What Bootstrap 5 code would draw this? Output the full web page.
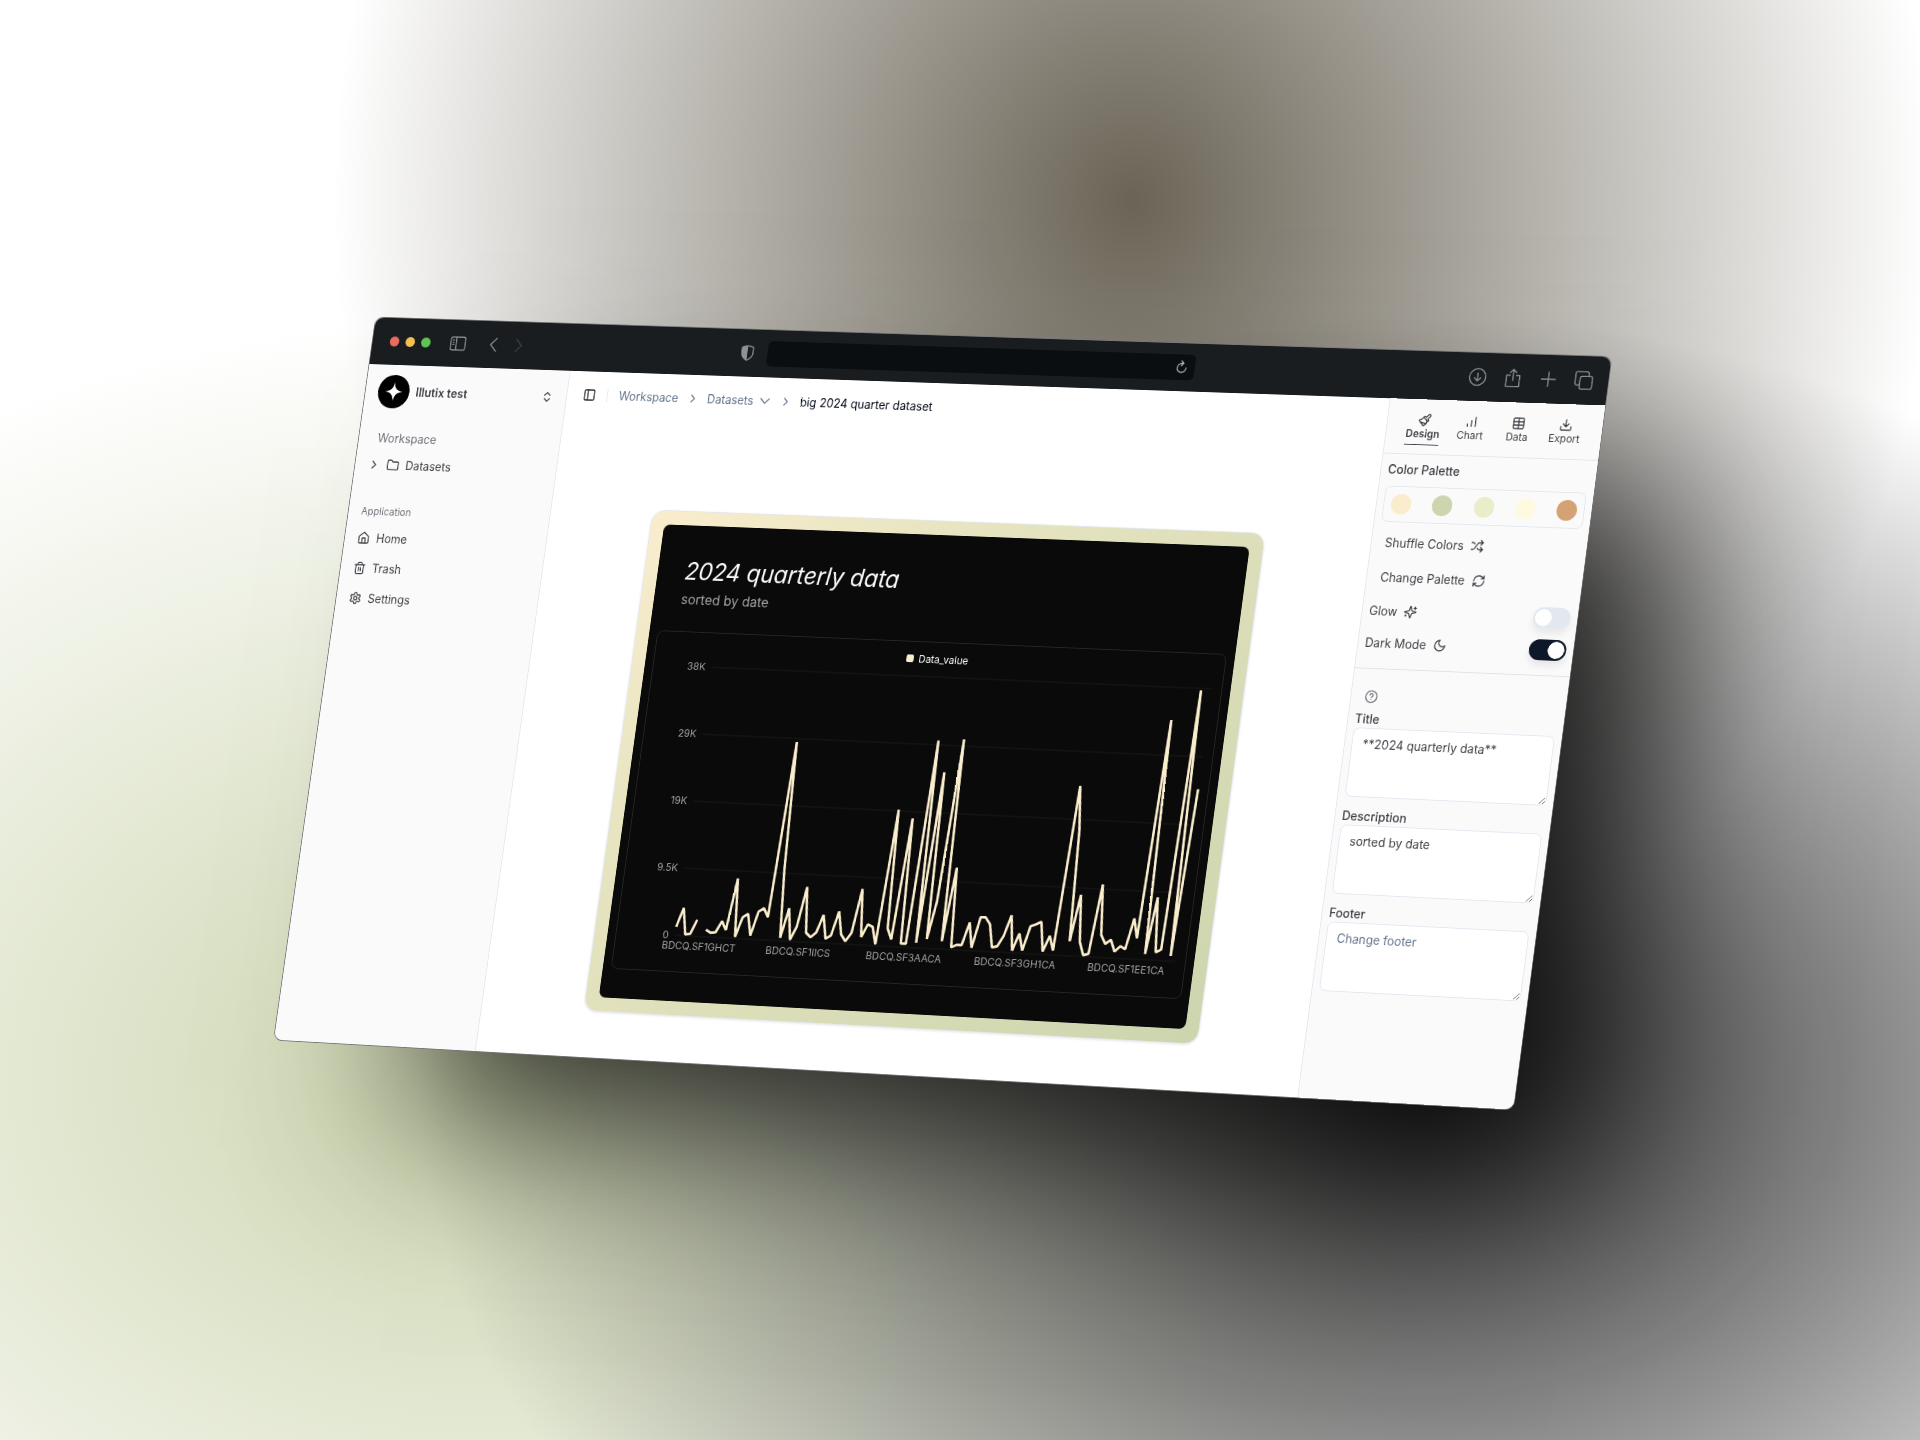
<!DOCTYPE html>
<html lang="en">
<head>
<meta charset="utf-8">
<meta name="viewport" content="width=device-width, initial-scale=1">
<title>Illutix</title>
<link href="https://cdn.jsdelivr.net/npm/bootstrap@5.3.0/dist/css/bootstrap.min.css" rel="stylesheet">
<style>
  body { font-family: Inter, "Liberation Sans", sans-serif; font-size: 14px; line-height: 20px; color: #3f3f46; }
  .stage {
    min-height: 100vh;
    background:
      radial-gradient(at 74% 75%, #262626 0, transparent 50%),
      radial-gradient(at 59% 14%, #6a6456 0, transparent 50%),
      radial-gradient(at 25% 75%, #ccd5ae 0, transparent 50%),
      #fff;
  }
  /* the tilted browser window */
  .browser {
    width: 1520px; min-height: 864px; flex: none;
    border-radius: 10px; background: #fff;
    transform-origin: 0 0;
    transform: matrix3d(.775949, .024184, 0, -.000026125, -.118569, .830671, 0, -.0000069236, 0, 0, 1, 0, 176, 29.5, 0, 1);
    box-shadow: 0 0 0 1px #77777a, 140px 110px 200px -50px rgba(0, 0, 0, .8);
  }
  svg { display: block; flex: none; }
  .ico { width: 16px; height: 16px; fill: none; stroke: currentColor; stroke-width: 2; stroke-linecap: round; stroke-linejoin: round; }
  .chrome-bar { height: 56px; background: #191d20; color: #8f9294; border-radius: 10px 10px 0 0; padding: 0 18px 0 22px; }
  .chrome-bar .btn { color: inherit; }
  .chrome-ico { width: 22px; height: 22px; stroke-width: 1.5; }
  .light { width: 12px; height: 12px; border-radius: 50%; }
  .address { width: 526px; height: 30px; border-radius: 6px; background: #0a0e11; color: #b5b7b8; }
  .address input { min-width: 0; }
  .btn { --bs-btn-padding-x: 0; --bs-btn-padding-y: 0; --bs-btn-border-width: 0; --bs-btn-font-size: 14px; --bs-btn-line-height: 20px; --bs-btn-color: inherit; }
  .side { width: 256px; background: #fafafa; flex: none; }
  .side-left { border-right: 1px solid #e2e8f0; border-bottom-left-radius: 10px; }
  .side-right { border-left: 1px solid #e2e8f0; border-bottom-right-radius: 10px; }
  .brand-row { padding: 12px 16px; }
  .brand { width: 40px; height: 40px; }
  .menu a { color: #3f3f46; text-decoration: none; height: 32px; }
  .hint { color: #71717a; }
  .space-label { padding: 14px 24px 6px; }
  .label-sm { font-size: 12px; line-height: 16px; }
  .top-line { height: 56px; padding: 0 20px; color: #64748b; }
  .top-line a { color: #64748b; text-decoration: none; }
  .top-line .rule { width: 1px; height: 16px; margin: 0 14px; background: #e2e8f0; }
  .top-line .sep { margin: 0 10px; }
  .crumb-menu { gap: 6px; }
  .frame {
    width: 754px; padding: 16px; border: 1px solid #e2e8f0; border-radius: 16px; margin-bottom: 54px;
    background: linear-gradient(135deg, #faedcd, #e9e5c2 25%, #ccd5ae);
    box-shadow: 0 1px 3px rgba(0, 0, 0, .1);
  }
  .poster { background: #0a0a0a; border-radius: 8px; padding: 36px 10px 34px; }
  .poster h1 { font-size: 28px; line-height: 36px; font-weight: 400; font-style: italic; color: #fafafa; margin-bottom: 3px; }
  .poster p { font-size: 16px; line-height: 24px; color: #a1a1a1; }
  .poster-head { padding: 0 24px; height: 89px; }
  .plot { width: 100%; height: auto; }
  .plot text { font-size: 12px; fill: #a1a1a1; }
  .tabs { height: 64px; border-bottom: 1px solid #e5e5e5; }
  .tab { width: 56px; font-size: 12px; line-height: 16px; }
  .tab span { border-bottom: 1px solid transparent; padding-bottom: 4px; }
  .tab.active span { border-color: #3f3f46; font-weight: 600; }
  .swatches { border: 1px solid #e2e8f0; border-radius: 8px; padding: 8px; margin-top: 9px; }
  .swatch { width: 24px; height: 24px; border-radius: 50%; }
  .tool { height: 40px; }
  .toggle-row { height: 37px; }
  .form-switch .form-check-input.toggle {
    width: 44px; height: 24px; margin: 0; border: 2px solid #e2e8f0; background-color: #e2e8f0;
    --bs-form-switch-bg: none; background-image: radial-gradient(circle 10px, #fff 95%, transparent); background-size: 20px 20px;
    box-shadow: 0 6px 10px rgba(0, 0, 0, .08);
  }
  .form-switch .form-check-input.toggle:checked { background-color: #0f172a; border-color: #0f172a; }
  .texts { margin-top: 11px; }
  .field { margin-bottom: 12px; }
  .field label, .group-title { display: block; font-weight: 500; }
  .field textarea { height: 80px; min-height: 80px; padding: 8px 12px; border: 1px solid #e2e8f0; border-radius: 8px; font-size: 14px; line-height: 20px; color: #3f3f46; background: #fff; }
  .field textarea::placeholder { color: #64748b; }
</style>
</head>
<body>
<div class="stage d-flex align-items-center justify-content-center overflow-hidden">
  <div class="browser d-flex flex-column">

    <header class="chrome-bar d-flex align-items-center">
      <div class="col d-flex align-items-center">
        <div class="d-flex gap-2 me-4">
          <span class="light" style="background:#ed6a5e"></span>
          <span class="light" style="background:#f5bf4f"></span>
          <span class="light" style="background:#61c554"></span>
        </div>
        <button class="btn me-4" aria-label="Sidebar"><svg class="ico chrome-ico" viewBox="0 0 24 24"><rect x="2" y="3.500" width="20" height="17" rx="2.500"/><path d="M9.500 3.500v17M5 7.500h1.500M5 10.500h1.500M5 13.500h1.500"/></svg></button>
        <button class="btn me-2" aria-label="Back"><svg class="ico chrome-ico" viewBox="0 0 24 24"><path d="M15 3.500 7 12l8 8.500"/></svg></button>
        <button class="btn opacity-50" aria-label="Forward"><svg class="ico chrome-ico" viewBox="0 0 24 24" opacity=".6"><path d="m9 3.500 8 8.500-8 8.500"/></svg></button>
        <svg class="ms-auto me-3" width="18" height="20" viewBox="0 0 18 20"><path d="M9 1.500c2.500 0 4.800.7 7 1.800v6.200c0 4-3 7.200-7 9-4-1.800-7-5-7-9V3.300c2.200-1.100 4.500-1.800 7-1.800z" fill="none" stroke="#8f9294" stroke-width="1.400"/><path d="M9 1.500v17c-4-1.800-7-5-7-9V3.300c2.200-1.100 4.500-1.800 7-1.800z" fill="#8f9294"/></svg>
      </div>
      <div class="address d-flex align-items-center px-2">
        <input class="flex-fill bg-transparent border-0" aria-label="Address">
        <button class="btn" aria-label="Reload"><svg class="ico" viewBox="0 0 24 24"><path d="M20 13a8 8 0 1 1-8-8h2M11 1l4 4-4 4"/></svg></button>
      </div>
      <div class="col d-flex align-items-center justify-content-end" style="gap:20px">
        <button class="btn" aria-label="Downloads"><svg class="ico chrome-ico" viewBox="0 0 24 24"><circle cx="12" cy="12" r="10.500"/><path d="M12 7v10M8 13l4 4 4-4"/></svg></button>
        <button class="btn" aria-label="Share"><svg class="ico chrome-ico" viewBox="0 0 24 24"><path d="M8 8.500H3.500v14h17v-14H16M12 15V1M8 5l4-4 4 4"/></svg></button>
        <button class="btn" aria-label="New tab"><svg class="ico chrome-ico" viewBox="0 0 24 24"><path d="M12 3v18M3 12h18"/></svg></button>
        <button class="btn" aria-label="Tabs"><svg class="ico chrome-ico" viewBox="0 0 24 24"><rect x="7" y="7" width="16" height="16" rx="2.500"/><path d="M7 18H3.500A2.500 2.500 0 0 1 1 15.500v-12A2.500 2.500 0 0 1 3.500 1h12A2.500 2.500 0 0 1 18 3.500V7"/></svg></button>
      </div>
    </header>

    <div class="d-flex flex-fill">
      <aside class="side side-left">
        <button class="btn brand-row d-flex w-100 align-items-center gap-2 text-start">
          <svg class="brand" viewBox="0 0 40 40"><circle cx="20" cy="20" r="20"/><path d="M20 9c1.200 7.500 3.500 9.800 11 11-7.500 1.200-9.800 3.500-11 11-1.200-7.500-3.500-9.800-11-11 7.500-1.200 9.800-3.500 11-11z" fill="#fff"/></svg>
          <span class="fw-semibold flex-fill">Illutix test</span>
          <svg class="ico" viewBox="0 0 24 24"><path d="m7 15 5 5 5-5M7 9l5-5 5 5"/></svg>
        </button>
        <div class="hint space-label">Workspace</div>
        <nav class="menu px-3 pb-4">
          <a href="#" class="d-flex align-items-center gap-2"><svg class="ico" viewBox="0 0 24 24"><path d="m9 18 6-6-6-6"/></svg><svg class="ico" viewBox="0 0 24 24"><path d="M20 20a2 2 0 0 0 2-2V8a2 2 0 0 0-2-2h-7.900a2 2 0 0 1-1.690-.9L9.600 3.900A2 2 0 0 0 7.930 3H4a2 2 0 0 0-2 2v13a2 2 0 0 0 2 2Z"/></svg>Datasets</a>
        </nav>
        <div class="hint label-sm px-3 pt-2 mb-2">Application</div>
        <nav class="menu d-flex flex-column gap-1 px-3">
          <a href="#" class="d-flex align-items-center gap-2"><svg class="ico" viewBox="0 0 24 24"><path d="M15 21v-8a1 1 0 0 0-1-1h-4a1 1 0 0 0-1 1v8"/><path d="M3 10a2 2 0 0 1 .7-1.500l7-6a2 2 0 0 1 2.600 0l7 6A2 2 0 0 1 21 10v9a2 2 0 0 1-2 2H5a2 2 0 0 1-2-2z"/></svg>Home</a>
          <a href="#" class="d-flex align-items-center gap-2"><svg class="ico" viewBox="0 0 24 24"><path d="M3 6h18M19 6v14a2 2 0 0 1-2 2H7a2 2 0 0 1-2-2V6M8 6V4a2 2 0 0 1 2-2h4a2 2 0 0 1 2 2v2M10 11v6M14 11v6"/></svg>Trash</a>
          <a href="#" class="d-flex align-items-center gap-2"><svg class="ico" viewBox="0 0 24 24"><path d="M12.220 2h-.44a2 2 0 0 0-2 2v.18a2 2 0 0 1-1 1.730l-.43.25a2 2 0 0 1-2 0l-.15-.08a2 2 0 0 0-2.730.73l-.22.38a2 2 0 0 0 .73 2.730l.15.1a2 2 0 0 1 1 1.720v.51a2 2 0 0 1-1 1.740l-.15.09a2 2 0 0 0-.73 2.730l.22.38a2 2 0 0 0 2.730.73l.15-.08a2 2 0 0 1 2 0l.43.25a2 2 0 0 1 1 1.730V20a2 2 0 0 0 2 2h.44a2 2 0 0 0 2-2v-.18a2 2 0 0 1 1-1.730l.43-.25a2 2 0 0 1 2 0l.15.08a2 2 0 0 0 2.730-.73l.22-.39a2 2 0 0 0-.73-2.730l-.15-.08a2 2 0 0 1-1-1.740v-.5a2 2 0 0 1 1-1.740l.15-.09a2 2 0 0 0 .73-2.730l-.22-.38a2 2 0 0 0-2.730-.73l-.15.08a2 2 0 0 1-2 0l-.43-.25a2 2 0 0 1-1-1.730V4a2 2 0 0 0-2-2z"/><circle cx="12" cy="12" r="3"/></svg>Settings</a>
        </nav>
      </aside>

      <main class="flex-fill d-flex flex-column">
        <nav class="top-line d-flex align-items-center" aria-label="Breadcrumb">
          <button class="btn text-dark" aria-label="Toggle sidebar"><svg class="ico" viewBox="0 0 24 24"><rect x="3" y="3" width="18" height="18" rx="2"/><path d="M9 3v18"/></svg></button>
          <span class="rule"></span>
          <a href="#">Workspace</a>
          <svg class="ico sep" viewBox="0 0 24 24"><path d="m9 18 6-6-6-6"/></svg>
          <a href="#" class="crumb-menu d-flex align-items-center">Datasets <svg class="ico" viewBox="0 0 24 24"><path d="m4 8 8 8 8-8"/></svg></a>
          <svg class="ico sep" viewBox="0 0 24 24"><path d="m9 18 6-6-6-6"/></svg>
          <span style="color:#020817">big 2024 quarter dataset</span>
        </nav>
        <div class="flex-fill d-flex justify-content-center align-items-end">
          <div class="frame">
            <div class="poster">
              <div class="poster-head">
                <h1>2024 quarterly data</h1>
                <p class="mb-0">sorted by date</p>
              </div>
              <svg class="plot" viewBox="0 0 700 400" role="img" aria-label="Data_value by series">
                <rect x=".5" y=".5" width="699" height="399" rx="8" fill="none" stroke="#262626"/>
                <rect x="312" y="16" width="9" height="9" rx="2" fill="#faedcd"/>
                <text x="327" y="25" style="fill:#fafafa">Data_value</text>
                <path d="M74 41H687M74 120H687M74 199H687M74 278H687M74 357H687" stroke="#1b1b1b"/>
                <g text-anchor="end"><text x="66" y="45">38K</text><text x="66" y="124">29K</text><text x="66" y="203">19K</text><text x="66" y="282">9.5K</text><text x="66" y="361">0</text></g>
                <g text-anchor="middle"><text x="105" y="373">BDCQ.SF1GHCT</text><text x="228" y="373">BDCQ.SF1IICS</text><text x="358" y="373">BDCQ.SF3AACA</text><text x="494" y="373">BDCQ.SF3GH1CA</text><text x="629" y="373">BDCQ.SF1EE1CA</text></g>
                <path id="series" fill="none" stroke="#faedcd" stroke-width="3" stroke-linejoin="bevel"/>
              </svg>
            </div>
          </div>
        </div>
      </main>

      <aside class="side side-right">
        <div class="tabs d-flex justify-content-center pt-3">
          <button class="btn tab active d-flex flex-column align-items-center"><svg class="ico" viewBox="0 0 24 24"><path d="m14.600 17.900-10.700-2.900M18.380 2.620a1 1 0 0 1 3 3L17.400 9.600l.9 1a2 2 0 0 1 0 2.800l-.9.900L9.700 6.600l.9-.9a2 2 0 0 1 2.800 0l1 .9zM9 8c-1.800 2.700-3.900 3.500-6.400 3.700a.5.5 0 0 0-.3.800l7.300 8.900a1 1 0 0 0 1.200.200C13 20.200 16 17 16 15"/></svg><span>Design</span></button>
          <button class="btn tab d-flex flex-column align-items-center"><svg class="ico" viewBox="0 0 24 24"><path d="M12 20V10M19 20V4M5 20v-4"/></svg><span>Chart</span></button>
          <button class="btn tab d-flex flex-column align-items-center"><svg class="ico" viewBox="0 0 24 24"><rect x="3" y="3" width="18" height="18" rx="2"/><path d="M12 3v18M3 9h18M3 15h18"/></svg><span>Data</span></button>
          <button class="btn tab d-flex flex-column align-items-center"><svg class="ico" viewBox="0 0 24 24"><path d="M21 15v4a2 2 0 0 1-2 2H5a2 2 0 0 1-2-2v-4M7 10l5 5 5-5M12 15V3"/></svg><span>Export</span></button>
        </div>
        <div class="px-2 pt-2">
          <div class="group-title">Color Palette</div>
          <div class="swatches d-flex justify-content-between">
            <span class="swatch" style="background:#faedcd"></span><span class="swatch" style="background:#ccd5ae"></span><span class="swatch" style="background:#e9edc9"></span><span class="swatch" style="background:#fefae0"></span><span class="swatch" style="background:#d4a373"></span>
          </div>
          <button class="btn tool d-flex align-items-center gap-2 px-2 mt-1">Shuffle Colors <svg class="ico" viewBox="0 0 24 24"><path d="m18 14 4 4-4 4M18 2l4 4-4 4M2 18h1.970a4 4 0 0 0 3.300-1.700l5.460-8.600a4 4 0 0 1 3.300-1.700H22M2 6h1.970a4 4 0 0 1 3.600 2.200M22 18h-6.040a4 4 0 0 1-3.300-1.800l-.36-.45"/></svg></button>
          <button class="btn tool d-flex align-items-center gap-2 px-2">Change Palette <svg class="ico" viewBox="0 0 24 24"><path d="M3 12a9 9 0 0 1 9-9 9.750 9.750 0 0 1 6.740 2.740L21 8M21 3v5h-5M21 12a9 9 0 0 1-9 9 9.750 9.750 0 0 1-6.740-2.740L3 16M8 16H3v5"/></svg></button>
          <div class="toggle-row form-switch p-0 d-flex align-items-center justify-content-between">
            <label for="glow" class="d-flex align-items-center gap-2">Glow <svg class="ico" viewBox="0 0 24 24"><path d="M9.940 15.500A2 2 0 0 0 8.500 14.060l-6.140-1.580a.5.5 0 0 1 0-.96L8.500 9.940A2 2 0 0 0 9.940 8.500l1.580-6.140a.5.5 0 0 1 .96 0L14.060 8.500A2 2 0 0 0 15.500 9.940l6.140 1.580a.5.5 0 0 1 0 .96L15.500 14.060a2 2 0 0 0-1.440 1.440l-1.580 6.140a.5.5 0 0 1-.96 0zM20 3v4M22 5h-4M4 17v2M5 18H3"/></svg></label>
            <input id="glow" type="checkbox" role="switch" class="form-check-input toggle">
          </div>
          <div class="toggle-row form-switch p-0 d-flex align-items-center justify-content-between">
            <label for="dark" class="d-flex align-items-center gap-2">Dark Mode <svg class="ico" viewBox="0 0 24 24"><path d="M12 3a6 6 0 0 0 9 9 9 9 0 1 1-9-9Z"/></svg></label>
            <input id="dark" type="checkbox" role="switch" class="form-check-input toggle" checked>
          </div>
        </div>
        <div class="texts border-top px-2 pt-4">
          <svg class="ico ms-2 mb-2 hint" viewBox="0 0 24 24"><circle cx="12" cy="12" r="10"/><path d="M9.090 9a3 3 0 0 1 5.830 1c0 2-3 3-3 3M12 17h.01"/></svg>
          <div class="field"><label for="f-title">Title</label><textarea id="f-title" class="form-control">**2024 quarterly data**</textarea></div>
          <div class="field"><label for="f-desc">Description</label><textarea id="f-desc" class="form-control">sorted by date</textarea></div>
          <div class="field"><label for="f-foot">Footer</label><textarea id="f-foot" class="form-control" placeholder="Change footer"></textarea></div>
        </div>
      </aside>
    </div>
  </div>
</div>
<script src="https://cdn.jsdelivr.net/npm/bootstrap@5.3.0/dist/js/bootstrap.bundle.min.js"></script>
<script>
  // quarterly values in thousands; null leaves a gap in the line
  const values = [1.1,3.8,.1,.2,2.2,null,.9,.5,.6,2.2,1,8.3,.1,2.9,3.4,.4,3.8,4.3,3.1,27.8,9.8,.3,4.5,.1,2,7.6,1.2,.6,1.3,3.8,.5,1,4.4,1.2,.3,1.5,7.7,1,2.8,2.5,.1,19,2.4,.9,17.9,.4,.4,28.9,.6,24.5,1.2,6.5,29.2,1,11.3,.2,.6,.6,3.8,.3,4.6,4.6,3.7,.5,.7,2.2,5.1,.2,2.6,.3,3.7,4,4.4,.3,2.5,.5,23.5,17.3,1.9,8.4,1.9,.1,.3,10,3,1.8,2.4,.8,1.6,1.2,5.5,2.8,33.2,.7,8.6,1,1.4,37.5,.6,23.8];
  const step = 613 / (values.length - 1);
  let pen = "M", d = "";
  values.forEach((v, i) => {
    if (v === null) { pen = "M"; return; }
    d += pen + (74 + i * step).toFixed(1) + " " + (356 - v / 38 * 317).toFixed(1);
    pen = "L";
  });
  document.getElementById("series").setAttribute("d", d);
</script>
</body>
</html>
